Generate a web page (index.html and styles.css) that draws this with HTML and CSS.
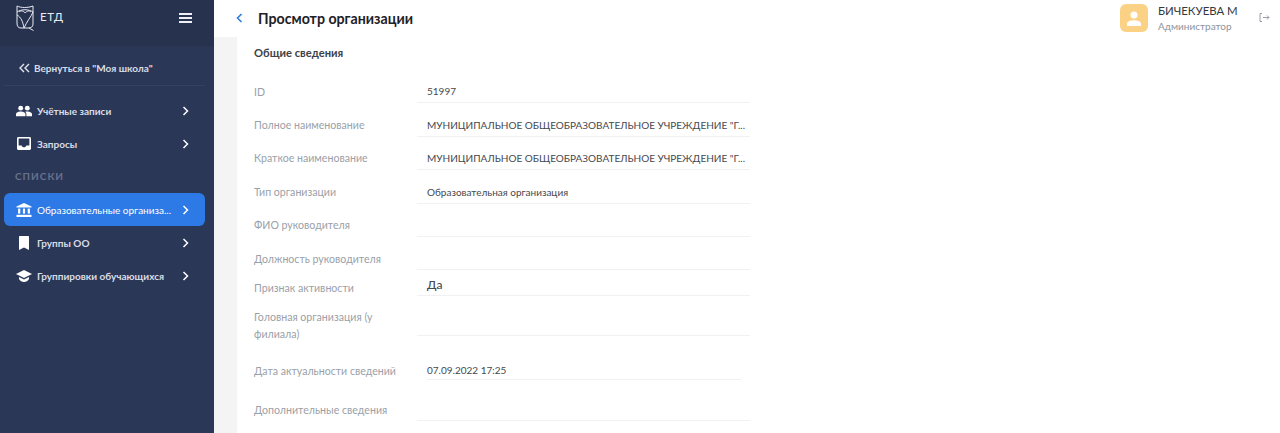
FILE: index.html
```html
<!DOCTYPE html>
<html lang="ru">
<head>
    <meta charset="UTF-8" />
    <meta name="viewport" content="width=device-width, initial-scale=1" />
    <title>Просмотр организации</title>
    <link rel="stylesheet" href="styles.css">
</head>
<body>
    <aside class="sidebar">
        <div class="logo-bar">
            <div class="logo">
                <svg width="19" height="26" viewBox="0 0 19 26" fill="none" stroke="#e8ebf2" stroke-width="1">
                    <path d="M1 1 C5 3 12 3 17 1 L17 19 C17 22 15 23 12 23 L5 23 C2 23 1 21 1 18 Z" />
                    <path d="M1 7 C5 4 13 4 17 7 C15 12 11 16 8 23" />
                    <path d="M1 10 C5 12 7 17 8 23" />
                    <path d="M3 7 C5 5 8 6 9 8 C11 6 13 5 15 7" />
                    <path d="M13 23 L17.500 25.500" />
                </svg>
                <span>ЕТД</span>
            </div>
            <div class="burger"><i></i><i></i><i></i></div>
        </div>
        <nav class="menu">
            <a class="back-link">
                <svg width="13" height="10" viewBox="0 0 13 10" fill="none" stroke="#dfe4ee" stroke-width="1.4"><path d="M6 1 L2 5 L6 9 M11 1 L7 5 L11 9" /></svg>
                Вернуться в "Моя школа"
            </a>
            <a class="item">
                <svg class="icon" width="16" height="12" viewBox="0 0 17 12" fill="#fff"><circle cx="5" cy="3" r="2.6" /><circle cx="12" cy="3" r="2.6" /><path d="M0 11.5 V9.5 C0 7.5 3 6.6 5 6.6 C7 6.6 10 7.5 10 9.5 V11.5 Z" /><path d="M11 11.5 V9.3 C11 8.2 10.5 7.4 9.8 6.9 C10.5 6.7 11.3 6.6 12 6.6 C14 6.6 17 7.5 17 9.5 V11.5 Z" /></svg>
                <span class="item-text">Учётные записи</span>
                <svg class="arrow" width="7" height="10" viewBox="0 0 7 10" fill="none" stroke="#fff" stroke-width="1.5"><path d="M1.5 1 L5.5 5 L1.5 9" /></svg>
            </a>
            <a class="item">
                <svg class="icon" width="16" height="13" viewBox="-1 0 16 13" fill="#fff"><path fill-rule="evenodd" d="M1.5 0 H12.5 C13.3 0 14 .7 14 1.5 V11.5 C14 12.3 13.3 13 12.5 13 H1.5 C.7 13 0 12.3 0 11.5 V1.500 C0 .7 .7 0 1.5 0 Z M1.600 1.600 V8.400 H4.600 C4.900 9.500 5.900 10.200 7 10.200 C8.100 10.200 9.100 9.500 9.400 8.400 H12.400 V1.600 Z" /></svg>
                <span class="item-text">Запросы</span>
                <svg class="arrow" width="7" height="10" viewBox="0 0 7 10" fill="none" stroke="#fff" stroke-width="1.5"><path d="M1.5 1 L5.5 5 L1.5 9" /></svg>
            </a>
            <div class="menu-title">СПИСКИ</div>
            <a class="item active">
                <svg class="icon" width="16" height="14" viewBox="0 0 15 14" fill="#fff"><path d="M7.5 0 L15 3.4 V4.6 H0 V3.4 Z" /><rect x="1.6" y="5.6" width="2.2" height="5" /><rect x="6.4" y="5.6" width="2.2" height="5" /><rect x="11.2" y="5.6" width="2.2" height="5" /><rect x="0" y="11.8" width="15" height="2.2" /></svg>
                <span class="item-text">Образовательные организа...</span>
                <svg class="arrow" width="7" height="10" viewBox="0 0 7 10" fill="none" stroke="#fff" stroke-width="1.5"><path d="M1.5 1 L5.5 5 L1.5 9" /></svg>
            </a>
            <a class="item">
                <svg class="icon" width="16" height="14" viewBox="-3 0 16 14" fill="#fff"><path d="M1 0 H9 C9.6 0 10 .4 10 1 V14 L5 11.4 L0 14 V1 C0 .4 .4 0 1 0 Z" /></svg>
                <span class="item-text">Группы ОО</span>
                <svg class="arrow" width="7" height="10" viewBox="0 0 7 10" fill="none" stroke="#fff" stroke-width="1.5"><path d="M1.5 1 L5.5 5 L1.5 9" /></svg>
            </a>
            <a class="item">
                <svg class="icon" width="16" height="12" viewBox="0 0 16 12" fill="#fff"><path d="M8 0 L16 4 L8 8 L0 4 Z" /><path d="M3 7 L8 9.5 L13 7 V9 C12 10.8 10 12 8 12 C6 12 4 10.8 3 9 Z" /></svg>
                <span class="item-text">Группировки обучающихся</span>
                <svg class="arrow" width="7" height="10" viewBox="0 0 7 10" fill="none" stroke="#fff" stroke-width="1.5"><path d="M1.5 1 L5.5 5 L1.5 9" /></svg>
            </a>
        </nav>
    </aside>

    <div class="main">
        <header class="topbar">
            <svg class="back" width="7" height="10" viewBox="0 0 7 10" fill="none" stroke="#2f7ce0" stroke-width="1.6"><path d="M5.5 1 L1.5 5 L5.5 9" /></svg>
            <h1>Просмотр организации</h1>
            <div class="user">
                <div class="avatar">
                    <svg width="14" height="15" viewBox="0 0 14 15" fill="#fff"><circle cx="7" cy="4" r="3.5" /><path d="M0 15 V12.6 C0 10.4 4 9.2 7 9.2 C10 9.2 14 10.4 14 12.6 V15 Z" /></svg>
                </div>
                <div class="user-info">
                    <div class="user-name">БИЧЕКУЕВА М</div>
                    <div class="user-role">Администратор</div>
                </div>
                <svg class="logout" width="11" height="9" viewBox="0 0 11 9" fill="none" stroke="#8d939d" stroke-width="0.9"><path d="M3 .5 H1 V8.5 H3 M4 4.5 H10 M8 2.5 L10 4.5 L8 6.5" /></svg>
            </div>
        </header>
        <div class="content">
            <section class="card">
                <h2>Общие сведения</h2>
                <div class="row"><div class="label">ID</div><div class="value">51997</div></div>
                <div class="row mid"><div class="label">Полное наименование</div><div class="value">МУНИЦИПАЛЬНОЕ ОБЩЕОБРАЗОВАТЕЛЬНОЕ УЧРЕЖДЕНИЕ "Г...</div></div>
                <div class="row mid"><div class="label">Краткое наименование</div><div class="value">МУНИЦИПАЛЬНОЕ ОБЩЕОБРАЗОВАТЕЛЬНОЕ УЧРЕЖДЕНИЕ "Г...</div></div>
                <div class="row mid"><div class="label">Тип организации</div><div class="value">Образовательная организация</div></div>
                <div class="row mid"><div class="label">ФИО руководителя</div><div class="value"></div></div>
                <div class="row"><div class="label">Должность руководителя</div><div class="value"></div></div>
                <div class="row short"><div class="label">Признак активности</div><div class="value big">Да</div></div>
                <div class="row tall"><div class="label">Головная организация (у филиала)</div><div class="value"></div></div>
                <div class="row date"><div class="label">Дата актуальности сведений</div><div class="value inset">07.09.2022 17:25</div></div>
                <div class="row last"><div class="label">Дополнительные сведения</div><div class="value"></div></div>
            </section>
        </div>
    </div>
</body>
</html>
```

FILE: styles.css
```css
* {
    box-sizing: border-box;
}

html, body {
    height: 100%;
}

body {
    margin: 0;
    display: flex;
    overflow: hidden;
    background-color: #fff;
    font-family: Lato, "Noto Sans", sans-serif;
    color: #333;
}

/* боковое меню */
.sidebar {
    width: 214px;
    flex-shrink: 0;
    background-color: #2b3757;
    color: #fff;
}

.logo-bar {
    height: 46px;
    padding: 0 22px 0 16px;
    display: flex;
    align-items: flex-start;
    justify-content: space-between;
    background-color: #27324f;
}

.logo {
    display: flex;
    align-items: flex-start;
    gap: 5px;
    padding-top: 5px;
    font-size: 11.5px;
    letter-spacing: 0.6px;
    color: #e8ebf2;
}

.logo span {
    margin-top: 5px;
}

.burger {
    margin-top: 13px;
    width: 13px;
    display: flex;
    flex-direction: column;
    gap: 2px;
}

.burger i {
    height: 2px;
    background-color: #eef0f5;
}

.menu {
    padding: 0 9px 0 4px;
}

.back-link {
    height: 40px;
    margin-bottom: 8px;
    padding: 4px 0 0 14px;
    display: flex;
    align-items: center;
    gap: 3px;
    font-size: 10px;
    font-weight: 700;
    color: #d8dde8;
    border-bottom: 1px solid #35415f;
}

.item {
    height: 33px;
    padding: 0 16px 0 12px;
    display: flex;
    align-items: center;
    font-size: 10px;
    font-weight: 700;
    color: #d8dde8;
    border-radius: 6px;
}

.item .icon {
    flex-shrink: 0;
    margin-right: 5px;
}

.item-text {
    flex: 1;
    white-space: nowrap;
}

.item.active {
    background-color: #2d7ae6;
    color: #fff;
    font-weight: 400;
}

.menu-title {
    height: 33px;
    padding: 10px 0 0 11px;
    font-size: 10px;
    font-weight: 700;
    letter-spacing: 1px;
    color: #67718a;
}

/* основная часть */
.main {
    flex: 1;
    display: flex;
    flex-direction: column;
    min-width: 0;
}

.topbar {
    height: 37px;
    padding-left: 22px;
    padding-bottom: 1px;
    display: flex;
    align-items: center;
    flex-shrink: 0;
}

.back {
    margin-right: 15px;
}

h1 {
    margin: 0;
    font-size: 14.2px;
    font-weight: 700;
    color: #1e2126;
}

.user {
    margin-left: auto;
    padding: 4px 10px 0 0;
    align-self: flex-start;
    display: flex;
}

.avatar {
    width: 28px;
    height: 28px;
    display: flex;
    align-items: center;
    justify-content: center;
    background-color: #fbd185;
    border-radius: 6px;
}

.user-info {
    width: 101px;
    margin-left: 10px;
}

.user-name {
    font-size: 11.4px;
    line-height: 14px;
    color: #33373e;
}

.user-role {
    margin-top: 1px;
    font-size: 10px;
    line-height: 14px;
    color: #8d939d;
}

.logout {
    margin-top: 9px;
}

.content {
    flex: 1;
    padding-left: 23px;
    background-color: #f4f4f5;
}

.card {
    height: 100%;
    padding-left: 17px;
    background-color: #fff;
}

h2 {
    margin: 0;
    height: 33px;
    padding-top: 9px;
    font-size: 11.2px;
    font-weight: 700;
    color: #3d4148;
}

/* строки формы */
.row {
    width: 496px;
    height: 33px;
    display: flex;
    align-items: stretch;
}

.row.mid {
    height: 33.5px;
}

.row.short {
    height: 26px;
}

.row.tall {
    height: 40px;
}

.row.date {
    height: 44px;
}

.row.last {
    height: 41px;
}

.label {
    width: 163px;
    flex-shrink: 0;
    align-self: flex-end;
    margin-bottom: 2px;
    font-size: 10.6px;
    line-height: 18px;
    color: #9a9fa8;
}

.mid .label {
    margin-bottom: 3px;
}

.short .label {
    margin-bottom: -1px;
}

.tall .label {
    margin-bottom: -7px;
    line-height: 17px;
}

.date .label {
    margin-bottom: 0;
}

.value {
    flex: 1;
    padding: 0 0 4px 10px;
    display: flex;
    align-items: flex-end;
    font-size: 10px;
    line-height: 14px;
    color: #45484e;
    border-bottom: 1px solid #f0f1f2;
    white-space: nowrap;
    overflow: hidden;
}

.value.big {
    font-size: 12px;
    font-weight: 500;
    padding-bottom: 3px;
}

.value.inset {
    flex: none;
    width: 314px;
    margin-left: 10px;
    padding-left: 0;
    padding-bottom: 2px;
}
```
